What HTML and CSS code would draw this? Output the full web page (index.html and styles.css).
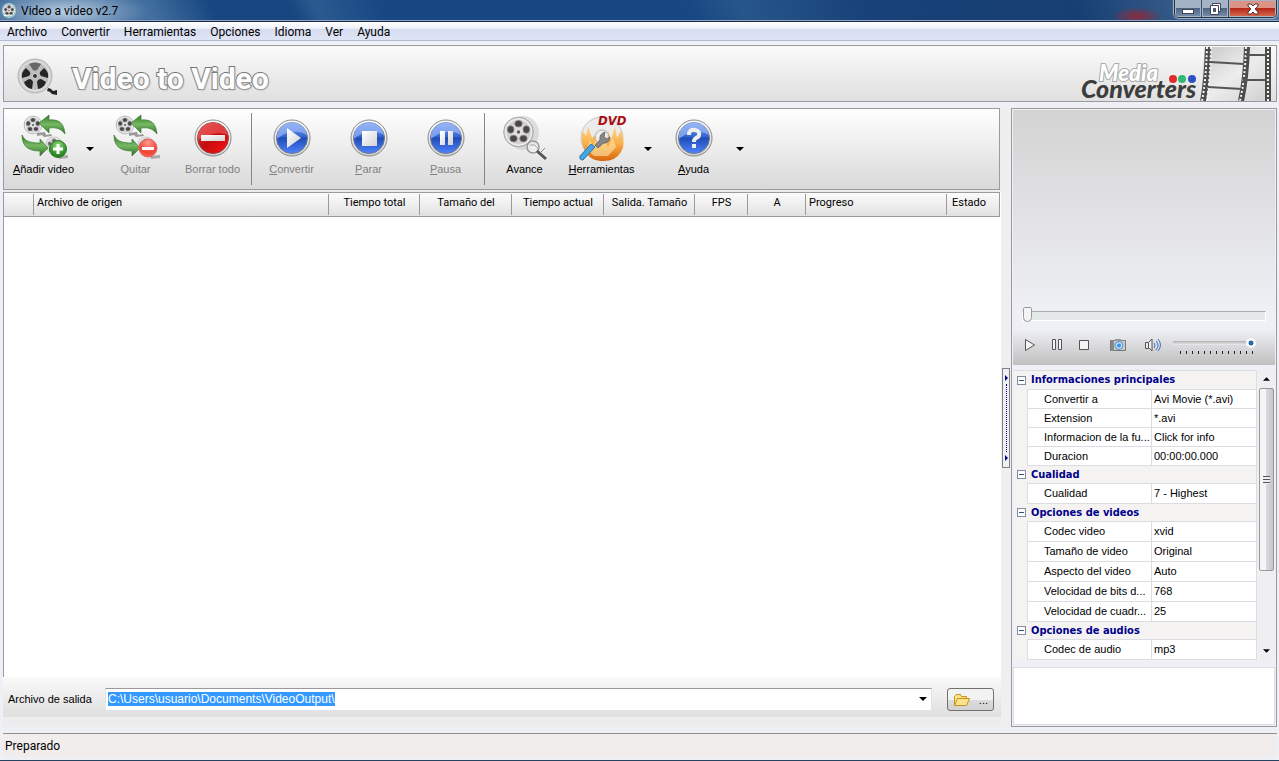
FILE: index.html
```html
<!DOCTYPE html>
<html lang="es">
<head>
<meta charset="utf-8">
<title>Video a video v2.7</title>
<link rel="stylesheet" href="styles.css">
</head>
<body>
<svg class="defs" aria-hidden="true">
  <defs>
    <linearGradient id="blue" x1="0" y1="0" x2="0" y2="1"><stop offset="0" stop-color="#7da2f0"/><stop offset=".45" stop-color="#3565cf"/><stop offset=".5" stop-color="#1f4cb4"/><stop offset="1" stop-color="#4f83ff"/></linearGradient>
    <linearGradient id="red" x1="0" y1="0" x2="1" y2="1"><stop offset="0" stop-color="#d93a3a"/><stop offset=".5" stop-color="#c40d10"/><stop offset="1" stop-color="#ff1010"/></linearGradient>
    <linearGradient id="rim" x1="0" y1="0" x2="0" y2="1"><stop offset="0" stop-color="#fff"/><stop offset="1" stop-color="#cfcfcf"/></linearGradient>
    <linearGradient id="glyph" x1="0" y1="0" x2="1" y2="1"><stop offset="0" stop-color="#fff"/><stop offset="1" stop-color="#d2d2d2"/></linearGradient>
    <linearGradient id="green" x1="0" y1="0" x2="0" y2="1"><stop offset="0" stop-color="#2f7d25"/><stop offset=".5" stop-color="#76b863"/><stop offset="1" stop-color="#2a7423"/></linearGradient>
    <linearGradient id="fire" x1="0" y1="0" x2="0" y2="1"><stop offset="0" stop-color="#ffd98a"/><stop offset=".5" stop-color="#f9ae4a"/><stop offset="1" stop-color="#d9660c"/></linearGradient>
    <radialGradient id="plus" cx=".5" cy=".3" r=".8"><stop offset="0" stop-color="#9cdb84"/><stop offset=".6" stop-color="#339628"/><stop offset="1" stop-color="#1b6a17"/></radialGradient>
    <radialGradient id="minus" cx=".5" cy=".2" r=".9"><stop offset="0" stop-color="#ff9b8b"/><stop offset=".6" stop-color="#ee4436"/><stop offset="1" stop-color="#ff6a50"/></radialGradient>
    <radialGradient id="metal"><stop offset="0" stop-color="#e6e6e8"/><stop offset=".75" stop-color="#cfcfd2"/><stop offset=".9" stop-color="#f2f2f2"/><stop offset="1" stop-color="#a5a5a8"/></radialGradient>
    <symbol id="reel" viewBox="0 0 40 40">
      <circle cx="20" cy="20" r="18" fill="url(#metal)" stroke="#a5a5aa"/>
      <g fill="#4b4645" stroke="#8a8688"><ellipse cx="20" cy="10" rx="4.500" ry="4"/><ellipse cx="29.500" cy="17" rx="4" ry="4.500"/><ellipse cx="26" cy="28" rx="4.500" ry="4"/><ellipse cx="14" cy="28" rx="4.500" ry="4"/><ellipse cx="10.500" cy="17" rx="4" ry="4.500"/></g>
      <circle cx="20" cy="20" r="2" fill="#555"/>
    </symbol>
    <symbol id="swap" viewBox="0 0 48 48">
      <path d="M17 20l8-1 1 3 5-1 1 2-8 1-2-2-5 1z" fill="#999"/>
      <use href="#reel" x="3" y="2" width="20" height="20"/>
      <use href="#reel" x="25" y="23" width="18" height="18" opacity=".8"/>
      <path d="M38 43l10-1v3l-9 1z" fill="#aaa"/>
      <path d="M19 10L29 2v5c11-1 15 4 16 14-4-5-8-7-16-6v5z" fill="url(#green)" stroke="#3f7a38" stroke-width=".7"/>
      <path d="M2 22c3 6 7 8 18 8v-4l8 9-8 8v-5C8 38 2 33 2 22z" fill="url(#green)" stroke="#3f7a38" stroke-width=".7"/>
    </symbol>
    <symbol id="orb" viewBox="0 0 48 48">
      <circle cx="24" cy="25" r="18" fill="url(#rim)" stroke="#898989"/>
      <circle cx="24" cy="25" r="15.500" fill="url(#blue)" stroke="#6d7890"/>
      <path d="M9 26a15 15 0 0 1 30-4C29 16 17 19 9 26z" fill="#a6c2fb" opacity=".6"/>
    </symbol>
    <symbol id="drop" viewBox="0 0 8 4"><path d="M0 0h8L4 4z"/></symbol>
  </defs>
</svg>

<header class="titlebar">
  <svg class="app-icon" viewBox="0 0 40 40"><use href="#reel"/><path d="M3 38q5-7 11-3" fill="none" stroke="#dfffff" stroke-width="4"/></svg>
  <span class="window-title">Video a video v2.7</span>
  <div class="window-buttons">
    <button aria-label="Minimizar"><svg width="14" height="14"><rect x="1.500" y="7.500" width="11" height="4" fill="#fff" stroke="#445"/></svg></button>
    <button aria-label="Restaurar"><svg width="14" height="14" fill="#fff" stroke="#445"><path d="M4.500 1.500h8v8h-8z"/><path d="M2.500 3.500h8v9h-8z"/><path d="M5.500 6.500h2v3h-2z" fill="#678"/></svg></button>
    <button class="close" aria-label="Cerrar"><svg width="14" height="14"><path d="M2 2h3l2 2 2-2h3v2L9 7l3 3v2H9l-2-2-2 2H2v-2l3-3-3-3z" fill="#fff" stroke="#533"/></svg></button>
  </div>
</header>
<nav class="menubar">
  <button>Archivo</button><button>Convertir</button><button>Herramientas</button><button>Opciones</button><button>Idioma</button><button>Ver</button><button>Ayuda</button>
</nav>

<div class="window">
  <section class="banner">
    <svg class="banner-reel" viewBox="0 0 42 42">
      <path d="M31 30q3 0 5 3l4-1v5l-5-1q-2-3-5-3z" fill="#222"/>
      <circle cx="18" cy="18" r="17" fill="#d2d2d2" stroke="#b2b2b2"/><circle cx="18" cy="18" r="14.500" fill="#bdbdbd" stroke="#e8e8e8"/>
      <g fill="#252525"><path d="M12 6q6-3 12 0l-4 6q-2 1-4 0z" fill="#666"/><path d="M27 10q5 4 4 10l-7-2q-2-2-1-4z"/><path d="M29 24q-2 6-8 7l-1-7q1-3 4-3z"/><path d="M15 31q-6-1-8-7l5-3q3 0 4 3z"/><path d="M5 20q-1-6 4-10l4 4q1 2-1 4z"/></g>
      <circle cx="18" cy="18" r="2.500" fill="#333" stroke="#ddd"/>
    </svg>
    <h1>Video to Video</h1>
    <svg class="brand" width="118" height="44" role="img" aria-label="Media Converters">
      <text class="brand-bottom" x="1" y="40">Converters</text>
      <text class="brand-top" x="19" y="23">Media</text>
      <circle cx="93" cy="21" r="4" fill="#df2b2b"/><circle cx="102" cy="21" r="4" fill="#2cbb70"/><circle cx="112" cy="21" r="4" fill="#2c50c4"/>
    </svg>
    <svg class="film" width="73" height="54" viewBox="0 0 73 54">
      <defs><linearGradient id="frame" x1="0" y1="0" x2="1" y2="1"><stop offset="0" stop-color="#c6c6c6"/><stop offset=".5" stop-color="#ededed"/><stop offset="1" stop-color="#cfcfcf"/></linearGradient></defs>
      <path d="M5 0h66v54H0z" fill="url(#frame)"/>
      <g fill="none" stroke="#4b4b4b" stroke-width="6"><path d="M8 0Q7 34 3 54M47 0Q46 32 41 54M68 0v54"/></g>
      <g fill="none" stroke="#f5f5f5" stroke-width="2" stroke-dasharray="2 2"><path d="M7 0Q6 34 2 54M11 0Q10 34 7 54M46 0Q45 32 40 54M68 0v54"/></g>
      <g stroke="#555" stroke-width="2"><path d="M10 15l34 2M8 40l34 2M46 8h20M43 33h24"/></g>
    </svg>
  </section>

  <div class="workspace">
    <main class="left">
      <div class="toolbar" role="toolbar">
        <button class="tool"><svg viewBox="0 0 48 48"><use href="#swap"/><circle cx="38" cy="36" r="8.500" fill="url(#plus)" stroke="#2e7a2c"/><path d="M38 31v10M33 36h10" stroke="#fff" stroke-width="3"/></svg><span><u>A</u>ñadir video</span></button>
        <button class="more" aria-label="Más opciones de añadir"><svg><use href="#drop"/></svg></button>
        <button class="tool off"><svg viewBox="0 0 48 48"><use href="#swap"/><circle cx="36" cy="35" r="9" fill="url(#minus)" stroke="#d66"/><path d="M30 35.500h12" stroke="#fff" stroke-width="3"/></svg><span>Quitar</span></button>
        <button class="tool off"><svg viewBox="0 0 48 48"><circle cx="24" cy="25" r="18" fill="url(#rim)" stroke="#898989"/><circle cx="24" cy="25" r="15.500" fill="url(#red)" stroke="#944"/><path d="M9 27a15 15 0 0 1 30-5C29 18 17 22 9 27z" fill="#f77" opacity=".45"/><rect x="12" y="22" width="24" height="6" fill="url(#glyph)"/></svg><span>Borrar todo</span></button>
        <i class="rule"></i>
        <button class="tool off"><svg viewBox="0 0 48 48"><use href="#orb"/><path d="M19 15v20l14-10z" fill="url(#glyph)"/></svg><span><u>C</u>onvertir</span></button>
        <button class="tool off"><svg viewBox="0 0 48 48"><use href="#orb"/><path d="M17 18h15v15H17z" fill="url(#glyph)"/></svg><span><u>P</u>arar</span></button>
        <button class="tool off"><svg viewBox="0 0 48 48"><use href="#orb"/><path d="M18 18h5v14h-5zM26 18h5v14h-5z" fill="url(#glyph)"/></svg><span><u>P</u>ausa</span></button>
        <i class="rule"></i>
        <button class="tool"><svg viewBox="0 0 48 48"><ellipse cx="22" cy="20" rx="16" ry="17" fill="#ccc" opacity=".6"/><use href="#reel" x="1" y="2" width="33" height="34"/><circle cx="32" cy="34" r="6" fill="#eee" fill-opacity=".7" stroke="#999" stroke-width="1.500"/><path d="M29 32h5l3 4" fill="none" stroke="#aaa"/><path d="M36 38l9 8" stroke="#555" stroke-width="3"/><path d="M44 35l-5 5" stroke="#888"/></svg><span>Avance</span></button>
        <button class="tool"><svg viewBox="0 0 48 48"><circle cx="24" cy="25" r="21" fill="#ececec" stroke="#c6c6c6"/><path d="M5 33Q2 25 5 18l3 5 2-10 4 12 3-3 2 7 4-7 4 8 3-13 3 10 4-14 2 12 4-8q5 16 0 22-6 10-20 9T5 33z" fill="url(#fire)"/><path d="M9 36l3-9 3 6 4-10 3 12 5-8 3 7 5-9 3 9-8 9H16z" fill="#ffe8a8" opacity=".6"/><circle cx="24" cy="24" r="7" fill="#eee" stroke="#999" opacity=".7"/><path d="M17 32l5-5q-1-6 5-8l-1 5 3 2 3-2q0 6-7 6l-5 5z" fill="#888" stroke="#555" stroke-width=".7"/><path d="M2 43l11-12 4 3L5 47q-4 0-3-4z" fill="#46a6df" stroke="#2577ad"/><text class="dvd" x="20" y="12">DVD</text></svg><span><u>H</u>erramientas</span></button>
        <button class="more" aria-label="Más herramientas"><svg><use href="#drop"/></svg></button>
        <button class="tool"><svg viewBox="0 0 48 48"><use href="#orb"/><path d="M19 22q0-6 6-5 5 1 4 5 0 2-3 3-2 1-2 4" fill="none" stroke="#eee" stroke-width="4"/><path d="M22 31h4v4h-4z" fill="#eee"/></svg><span><u>A</u>yuda</span></button>
        <button class="more" aria-label="Más ayuda"><svg><use href="#drop"/></svg></button>
      </div>

      <div class="list">
        <table class="files">
          <colgroup><col class="c-mark"><col><col class="c-total"><col class="c-time"><col class="c-time"><col class="c-total"><col class="c-fps"><col class="c-a"><col class="c-progress"><col class="c-state"></colgroup>
          <thead><tr><td></td><th class="start">Archivo de origen</th><th>Tiempo total</th><th>Tamaño del</th><th>Tiempo actual</th><th>Salida. Tamaño</th><th>FPS</th><th>A</th><th class="start">Progreso</th><th class="state">Estado</th></tr></thead>
        </table>
      </div>

      <div class="output">
        <label for="path">Archivo de salida</label>
        <div class="combo"><input id="path" type="text" value="C:\Users\usuario\Documents\VideoOutput\"><button aria-label="Mostrar rutas"><svg><use href="#drop"/></svg></button></div>
        <button class="browse" aria-label="Examinar"><svg width="18" height="14" viewBox="0 0 18 14" fill="#fce28c" stroke="#c49416"><path d="M1.500 12.500v-9l2-2h4l1 2h5v3"/><path d="M1.500 12.500l3-7h12l-3 7z"/></svg><span>...</span></button>
      </div>
    </main>

    <div class="splitter"><button aria-label="Ocultar panel"><svg viewBox="0 0 3 6"><path d="M0 0l3 3-3 3z"/></svg><i></i><svg viewBox="0 0 3 6"><path d="M0 0l3 3-3 3z"/></svg></button></div>

    <aside class="side">
      <div class="player">
        <input class="seek" type="range" min="0" max="100" value="0" aria-label="Posición">
        <div class="controls">
          <button aria-label="Reproducir"><svg width="12" height="14"><path d="M1.500 1.500v11l9-5.500z" fill="#f5f5f5" stroke="#555"/></svg></button>
          <button aria-label="Pausa"><svg width="12" height="14" fill="#f5f5f5" stroke="#555"><path d="M1.500 1.500h3v10h-3zM7.500 1.500h3v10h-3z"/></svg></button>
          <button aria-label="Parar"><svg width="12" height="14"><path d="M1.500 2.500h9v9h-9z" fill="#f5f5f5" stroke="#555"/></svg></button>
          <button class="camera" aria-label="Capturar"><svg width="18" height="14"><path d="M1.500 2.500h15v10h-15z" fill="#c6ced6" stroke="#777"/><path d="M2 2h3v11H2z" fill="#888"/><path d="M6 1h6v2H6z" fill="#999"/><circle cx="10" cy="7.500" r="4" fill="#b9dcff" stroke="#6b8cad"/><circle cx="10" cy="7.500" r="2" fill="#3e91e4"/></svg></button>
          <button class="sound" aria-label="Silenciar"><svg width="18" height="14" fill="none"><path d="M1.500 4.500h3v6h-3zM5 4l3-3v12l-3-3" fill="#eee" stroke="#555"/><path d="M10 5q2 2 0 5M12 3q4 4 0 9M14 1q5 6 0 12" stroke="#3f77c0"/></svg></button>
          <div class="volume"><input type="range" min="0" max="100" value="100" aria-label="Volumen"><i></i></div>
        </div>
      </div>
      <div class="props">
        <table>
          <colgroup><col class="p-gutter"><col class="p-name"><col></colgroup>
          <tbody class="first">
            <tr><td class="fold"><button aria-label="Contraer"></button></td><th colspan="2">Informaciones principales</th></tr>
            <tr><td></td><td>Convertir a</td><td>Avi Movie (*.avi)</td></tr>
            <tr><td></td><td>Extension</td><td>*.avi</td></tr>
            <tr><td></td><td>Informacion de la fu...</td><td>Click for info</td></tr>
            <tr><td></td><td>Duracion</td><td>00:00:00.000</td></tr>
          </tbody>
          <tbody>
            <tr><td class="fold"><button aria-label="Contraer"></button></td><th colspan="2">Cualidad</th></tr>
            <tr><td></td><td>Cualidad</td><td>7 - Highest</td></tr>
          </tbody>
          <tbody>
            <tr><td class="fold"><button aria-label="Contraer"></button></td><th colspan="2">Opciones de videos</th></tr>
            <tr><td></td><td>Codec video</td><td>xvid</td></tr>
            <tr><td></td><td>Tamaño de video</td><td>Original</td></tr>
            <tr><td></td><td>Aspecto del video</td><td>Auto</td></tr>
            <tr><td></td><td>Velocidad de bits d...</td><td>768</td></tr>
            <tr><td></td><td>Velocidad de cuadr...</td><td>25</td></tr>
          </tbody>
          <tbody>
            <tr><td class="fold"><button aria-label="Contraer"></button></td><th colspan="2">Opciones de audios</th></tr>
            <tr><td></td><td>Codec de audio</td><td>mp3</td></tr>
          </tbody>
        </table>
        <div class="scroll">
          <button aria-label="Subir"><svg class="up"><use href="#drop"/></svg></button>
          <div class="track"><div class="thumb"><i></i></div></div>
          <button aria-label="Bajar"><svg><use href="#drop"/></svg></button>
        </div>
      </div>
      <div class="hint"></div>
    </aside>
  </div>
  <footer class="status">Preparado</footer>
</div>
<script src="main.js"></script>
</body>
</html>
```
FILE: styles.css
```css
* { box-sizing: border-box; }
body {
  margin: 0;
  min-height: 100vh;
  display: flex;
  flex-direction: column;
  background: #eff0f5;
  color: #000;
  font: 11px/16px "Liberation Sans", Arial, sans-serif;
}
button { padding: 0; border: 0; background: none; font: inherit; color: inherit; }
.defs { position: absolute; width: 0; height: 0; }

.titlebar {
  display: flex;
  align-items: center;
  height: 22px;
  padding-left: 2px;
  border-bottom: 1px solid #172744;
  box-shadow: inset 0 -1px #8fa6c4;
  background:
    radial-gradient(ellipse 85px 24px at 65px 12px, rgba(205, 222, 238, .85), transparent),
    radial-gradient(ellipse 26px 9px at calc(100% - 142px) 16px, #8e2b3c, transparent),
    linear-gradient(65deg, #3a6596 0%, #426f9f 12%, #174680 17%, #174680 23%, #2b5a90 25%, #184884 30%, #184884 54%, #27568a 58%, #174178 68%, #173f73 84%, #54789d 100%);
}
.app-icon { width: 14px; height: 15px; margin-right: 5px; background: #9adbe0; border-radius: 8px; }
.window-title { font: 12px/20px Roboto, sans-serif; }
.window-buttons {
  display: flex;
  align-self: flex-start;
  margin: 0 2px 0 auto;
  height: 18px;
  border: 1px solid #26344a;
  border-top: 0;
  border-radius: 0 0 5px 5px;
  overflow: hidden;
  box-shadow: 0 0 1px 1px #a9bace;
}
.window-buttons button {
  display: grid;
  place-items: center;
  width: 27px;
  border-right: 1px solid #3b4b63;
  box-shadow: inset 0 0 0 1px #a6b4c6;
  background: linear-gradient(#a3b2c4 45%, #4d6584 50%, #7a91ad);
}
.window-buttons .close { width: 47px; border: 0; background: linear-gradient(#dc9285 45%, #b5281a 50%, #d97050); }

.menubar {
  display: flex;
  gap: 14px;
  height: 19px;
  padding-left: 7px;
  border-bottom: 1px solid #b5bbd3;
  background: linear-gradient(#fff, #eff2f9 35%, #d7def0 40%, #dfe4f5);
  font: 12px/20px Roboto, sans-serif;
}

.window { flex: 1; display: flex; flex-direction: column; padding: 4px 2px 0 3px; border-bottom: 1px solid #24425e; }
.banner {
  display: flex;
  align-items: center;
  height: 57px;
  padding: 0 3px 0 13px;
  border: 1px solid #9b9b9f;
  background: linear-gradient(#fafafa, #e0e0e0);
}
.banner-reel { width: 42px; height: 42px; margin: 10px 13px 0 0; }
h1 {
  flex: 1;
  margin: 10px 0 0;
  font: bold 30px/36px Roboto, sans-serif;
  color: #fdfdfd;
  -webkit-text-stroke: 2px #737373;
  paint-order: stroke fill;
  text-shadow: 1px 1px 2px #aaa;
}
.brand { margin: 12px 2px 0 0; }
.brand-top { font: italic 900 22px Lato, sans-serif; fill: #fff; stroke: #a9a9a9; stroke-width: 2px; paint-order: stroke; }
.brand-bottom { font: italic 900 25px Lato, sans-serif; fill: #3d3d3d; }

.workspace { flex: 1; display: flex; padding-top: 6px; }
.left { flex: 1; min-width: 0; display: flex; flex-direction: column; background: #ededed; }
.toolbar {
  display: flex;
  height: 82px;
  margin: 0 1px 2px 0;
  padding: 4px 0 4px 1px;
  border: 1px solid #9b9b9f;
  background: linear-gradient(#fff, #d9d9d9);
}
.tool { width: 77px; display: flex; flex-direction: column; align-items: center; }
.tool svg { width: 48px; height: 48px; overflow: visible; }
.off { color: #808080; }
.more { width: 15px; }
.more svg { display: block; width: 8px; height: 4px; margin: 0 auto; }
.rule { width: 1px; margin-right: 1px; background: #858585; }
.dvd { font: italic bold 13px "DejaVu Sans Condensed", sans-serif; fill: #a90d12; }

.list { flex: 1; background: #fff; border-left: 1px solid #9b9b9f; }
.files { width: calc(100% - 1px); table-layout: fixed; border-collapse: separate; border-spacing: 0; border: 1px solid #9b9b9f; border-left: 0; background: linear-gradient(#fbfbfb, #e2e2e2); }
.files td, .files th { height: 23px; padding: 0; font: 11px/20px Roboto, sans-serif; white-space: nowrap; background: linear-gradient(#9b9b9f, #9b9b9f) right 1px / 1px 21px no-repeat; vertical-align: top; }
.files tr :last-child { background: none; }
.files .start { text-align: left; padding-left: 3px; }
.files .state { text-align: left; padding-left: 5px; }
.c-mark { width: 30px; }
.c-total { width: 91px; }
.c-time { width: 92px; }
.c-fps { width: 53px; }
.c-a { width: 58px; }
.c-progress { width: 141px; }
.c-state { width: 52px; }

.output {
  display: flex;
  align-items: center;
  height: 40px;
  margin-bottom: 10px;
  padding: 4px 7px 0 5px;
  background: linear-gradient(#fafafa, #dfdfdf);
}
.output label { width: 97px; }
.combo { flex: 1; display: flex; height: 23px; border: 1px solid #e2e3ea; border-top-color: #9b9b9f; background: #fff; }
.combo input { flex: 1; min-width: 0; height: 21px; padding: 0 2px; border: 0; outline: 0; background: none; font: 12px/16px "Liberation Sans", Arial, sans-serif; }
.combo input::selection { background: #3399ff; color: #fff; }
.combo button { width: 16px; }
.combo svg { display: block; width: 8px; height: 4px; margin: 0 auto; }
.browse {
  display: flex;
  align-items: center;
  justify-content: space-between;
  width: 47px;
  height: 23px;
  margin-left: 15px;
  padding: 2px 5px 0;
  border: 1px solid #707070;
  border-radius: 3px;
  background: linear-gradient(#f2f2f2 50%, #dcdcdc 50%, #d2d2d2);
}

.splitter { width: 10px; display: flex; align-items: center; justify-content: center; background: #efeff1; }
.splitter button { width: 8px; height: 100px; border: 1px solid #808088; display: flex; flex-direction: column; align-items: center; padding: 6px 0; }
.splitter svg { width: 3px; height: 6px; fill: #00008b; }
.splitter i { flex: 1; margin: 3px 0; border-left: 1px dotted #00008b; }

.side { width: 266px; display: flex; flex-direction: column; padding: 1px; border: 1px solid #9b9b9f; }
.player { height: 255px; display: flex; flex-direction: column; justify-content: flex-end; padding: 0 9px 11px; background: linear-gradient(#d3d3d3, #eff0f5 80%, #eff0f5 86%, #c0c0c0); }
.seek, .volume input { appearance: none; width: 100%; margin: 0; background: none; }
.seek { height: 18px; }
.seek::-webkit-slider-runnable-track { height: 10px; border: 1px solid #fff; border-top-color: #a5adad; background: #e4e8e8; }
.seek::-webkit-slider-thumb { appearance: none; width: 9px; height: 15px; margin-top: -5px; border: 1px solid #9a9a9a; border-radius: 2px 2px 5px 5px; background: #f4f4f4; }
.controls { display: flex; align-items: center; margin-top: 11px; padding-left: 2px; height: 18px; }
.controls button { height: 14px; margin-right: 15px; }
.controls svg { display: block; }
.controls .camera { margin-left: 4px; }
.controls .sound { margin: 0 11px 0 2px; }
.volume { width: 83px; height: 16px; }
.volume input { display: block; height: 12px; }
.volume input::-webkit-slider-runnable-track { height: 4px; background: linear-gradient(#b0b0b0, #eee); }
.volume input::-webkit-slider-thumb { appearance: none; width: 10px; height: 10px; margin-top: -3px; border-radius: 5px; background: radial-gradient(#2568ae 30%, #f8fafc 40%); }
.volume i { display: block; height: 3px; margin: 2px 3px 0 7px; background: repeating-linear-gradient(90deg, #222 0 1px, transparent 1px 6px); }

.props { flex: 1; display: flex; gap: 1px; padding: 5px 0 7px 1px; }
.props table { flex: 1; align-self: flex-start; table-layout: fixed; border-collapse: separate; border-spacing: 0; border: 1px solid #dcdde2; border-left: 0; border-bottom: 0; }
.p-gutter { width: 13px; }
.p-name { width: 124px; }
.props td, .props th { height: 20px; padding: 0 0 0 3px; border-bottom: 1px solid #dcdde2; line-height: 17px; white-space: nowrap; overflow: hidden; background: #fff; }
.props td:first-child { padding: 0; border-bottom-color: #f4f3f2; background: #f4f3f2; }
.props td + td { padding-left: 16px; border-left: 1px solid #dcdde2; }
.props td + td + td { padding-left: 2px; }
.props tr:first-child > * { height: 18px; background: #f4f3f2; }
.props .first tr > * { height: 19px; }
.props th { padding-left: 4px; text-align: left; color: #00008b; font: bold 11px/16px "DejaVu Sans Condensed", sans-serif; }
.fold button { display: block; width: 9px; height: 9px; margin-left: 3px; border: 1px solid #848ca0; background: linear-gradient(#33517f, #33517f) center / 5px 1px no-repeat, #fff; }
.scroll { width: 17px; display: flex; flex-direction: column; background: #efeff1; }
.scroll button { height: 18px; }
.scroll svg { display: block; width: 7px; height: 4px; margin: 0 auto; }
.scroll .up { transform: rotate(180deg); }
.track { flex: 1; }
.thumb { display: grid; place-items: center; width: 15px; height: 183px; margin: 0 1px; border: 1px solid #98989c; border-radius: 2px; background: linear-gradient(90deg, #f5f5f5 45%, #dadade 50%, #c5c5c9); }
.thumb i { width: 7px; height: 8px; background: repeating-linear-gradient(#555 0 1px, #eee 1px 3px); }
.hint { height: 58px; border: 1px solid #dcdde2; background: #fff; }

.status { height: 24px; margin: 6px 0 3px; padding-left: 2px; border-top: 1px solid #8e8e92; background: #f0edec; font: 12px/24px Roboto, sans-serif; }
```
FILE: main.js
```js
const path = document.getElementById("path");
path.focus();
path.select();
```
